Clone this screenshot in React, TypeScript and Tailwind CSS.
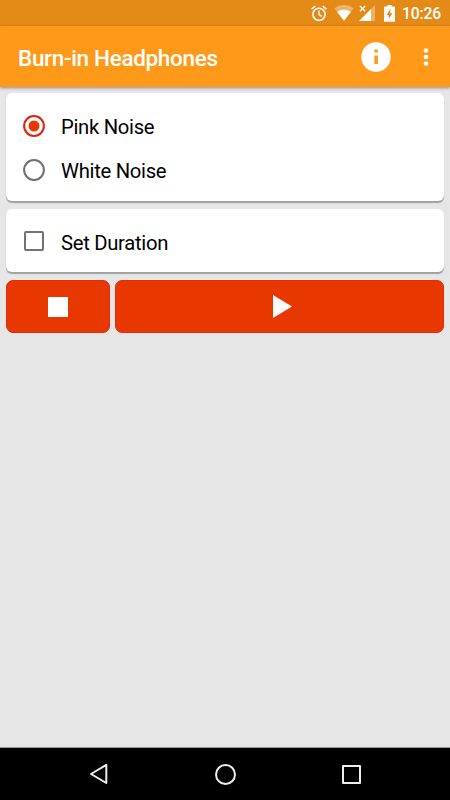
import React from 'react';

type IconProps = { className?: string };

const AlarmIcon = ({ className }: IconProps) => (
  <svg viewBox="0 0 16 17" className={className} fill="none" stroke="#fff">
    <circle cx="8" cy="9.3" r="6.1" strokeWidth="1.6" />
    <path d="M8 5.6v4l2.9 1.8" strokeWidth="1.3" />
    <path d="M.6 4.1 4.2 1.1M15.4 4.1l-3.6-3" strokeWidth="1.5" />
  </svg>
);

const WifiIcon = ({ className }: IconProps) => (
  <svg viewBox="0 0 20 16" className={className} fill="#fff">
    <path d="M10 15.8.4 3.4C3 1.3 6.3.1 10 .1s7 1.2 9.6 3.3z" opacity=".35" />
    <path d="M10 15.8 3.2 7C5.100 5.600 7.400 4.800 10 4.800s4.900.8 6.800 2.200z" />
  </svg>
);

const SignalIcon = ({ className }: IconProps) => (
  <svg viewBox="0 0 16 16" className={className} fill="#fff">
    <path d="M16 0v16h-4V4z" opacity=".35" />
    <path d="M12 4v12H0z" />
    <path d="M.9 1l5.200 5.200M6.100 1 .9 6.200" stroke="#fff" strokeWidth="1.4" />
  </svg>
);

const BatteryIcon = ({ className }: IconProps) => (
  <svg viewBox="0 0 11 17" className={className} fill="#fff">
    <path
      fillRule="evenodd"
      d="M3.4 0h4.2v1.6h2.3c.6 0 1.1.5 1.1 1.100v13c0 .6-.5 1.100-1.100 1.100H1.100C.5 16.800 0 16.300 0 15.700v-13c0-.6.5-1.100 1.100-1.100h2.300zM6.300 4.100 2.600 10h2.100v4.100L8.400 8.200H6.300z"
    />
  </svg>
);

const InfoIcon = ({ className }: IconProps) => (
  <svg viewBox="0 0 30 30" className={className}>
    <circle cx="15" cy="15" r="14.7" fill="#fff" />
    <path d="M13.400 7.600h3.500v3h-3.500zM13.400 13.400h3.500v8.600h-3.500z" fill="#ff991a" />
  </svg>
);

const MoreIcon = ({ className }: IconProps) => (
  <svg viewBox="0 0 6 20" className={className} fill="#fff">
    <circle cx="3" cy="3.5" r="2.300" />
    <circle cx="3" cy="10" r="2.300" />
    <circle cx="3" cy="16.5" r="2.300" />
  </svg>
);

const Radio = ({ label, checked }: { label: string; checked?: boolean }) => (
  <label className="flex h-11 items-center">
    <svg viewBox="0 0 22 22" className="mr-4 h-[22px] w-[22px]" fill="none">
      <circle
        cx="11"
        cy="11"
        r="9.9"
        strokeWidth="2"
        stroke={checked ? '#e2200a' : '#707070'}
      />
      {checked && <circle cx="11" cy="11" r="5.5" fill="#e83800" />}
    </svg>
    <span className="pt-[2px] text-[20.25px] leading-6 tracking-[-0.3px]">{label}</span>
  </label>
);

const App = () => {
  return (
    <div className="flex h-[800px] w-[450px] flex-col overflow-hidden bg-[#e6e6e6] font-['Roboto',sans-serif] text-black">
      {/*status bar*/}
      <div className="flex h-[26px] shrink-0 items-center justify-end bg-[#e48a17] pr-[9px] text-white">
        <AlarmIcon className="mr-[7px] h-[17px] w-4" />
        <WifiIcon className="mr-[5px] h-4 w-5" />
        <SignalIcon className="mr-[9px] h-4 w-4" />
        <BatteryIcon className="mr-[7px] h-[17px] w-[11px]" />
        <span className="pt-[2px] text-[15.75px] font-medium leading-5 tracking-[-0.2px]">
          10:26
        </span>
      </div>

      {/*app bar*/}
      <header className="z-10 flex h-[61px] shrink-0 items-center bg-[#ff991a] pl-[18px] pr-[21px] text-white shadow-[0_1px_3px_rgba(0,0,0,0.4)]">
        <h1 className="flex-1 pt-[2px] text-[22.5px] font-medium leading-7 tracking-[-0.33px]">
          Burn-in Headphones
        </h1>
        <InfoIcon className="mr-[32px] h-[30px] w-[30px]" />
        <MoreIcon className="h-5 w-[6px]" />
      </header>

      <main className="flex flex-1 flex-col px-[6px] pt-[6px]">
        <div className="h-[108px] rounded-md bg-white pl-[17px] pt-[11px] shadow-[0_1.5px_1px_rgba(0,0,0,0.3)]">
          <Radio label="Pink Noise" checked />
          <Radio label="White Noise" />
        </div>

        <div className="mt-2 flex h-[63px] items-center rounded-md bg-white pl-[18px] shadow-[0_1.5px_1px_rgba(0,0,0,0.3)]">
          <span className="mr-[17px] mt-px h-5 w-5 rounded-[2px] border-2 border-[#737373]" />
          <span className="pt-[4px] text-[20.25px] leading-6 tracking-[-0.3px]">
            Set Duration
          </span>
        </div>

        {/*controls*/}
        <div className="mt-2 flex h-[53px] gap-[5px]">
          <button className="flex w-[104px] items-center justify-center rounded-[7px] border border-[#e8280f] bg-[#e83800]">
            <span className="h-5 w-5 bg-white" />
          </button>
          <button className="flex flex-1 items-center justify-center rounded-[7px] border border-[#e8280f] bg-[#e83800]">
            <svg viewBox="0 0 19 23" className="ml-[6px] h-[23px] w-[19px]" fill="#fff">
              <path d="M0 0l19 11.5L0 23z" />
            </svg>
          </button>
        </div>
      </main>

      {/*navigation bar*/}
      <nav className="flex h-[53px] shrink-0 items-center justify-between border-t border-[#999] bg-black pl-[89px] pr-[89px]">
        <svg
          viewBox="0 0 20 22"
          className="h-[22px] w-5"
          fill="none"
          stroke="#eee"
          strokeWidth="2"
          strokeLinejoin="round"
        >
          <path d="M17.3 1.8v18.2L2 11z" />
        </svg>
        <span className="h-[21px] w-[21px] rounded-full border-2 border-[#eee]" />
        <span className="h-[19px] w-[19px] rounded-[1px] border-2 border-[#eee]" />
      </nav>
    </div>
  );
};

export default App;
